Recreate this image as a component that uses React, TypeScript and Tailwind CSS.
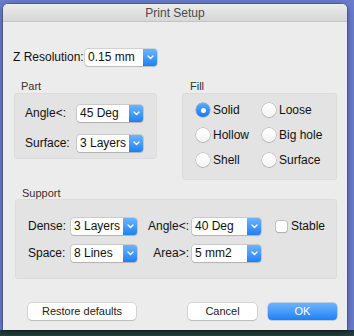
import React from "react";

const font = { fontFamily: '"Liberation Sans", Arial, sans-serif' };

function Chevron() {
  return (
    <svg width="7" height="5" viewBox="0 0 7 5" fill="none">
      <path d="M1 1 L3.5 3.5 L6 1" stroke="white" strokeWidth="1.3" strokeLinecap="round" strokeLinejoin="round" />
    </svg>
  );
}

function Select({ value, w }: { value: string; w: string }) {
  return (
    <div className={`flex h-[17px] ${w} rounded-[3px] bg-white shadow-[0_0_0_0.5px_rgba(0,0,0,0.22),0_1px_1px_rgba(0,0,0,0.12)]`}>
      <span className="flex-1 pl-[3px] text-[12px] leading-[17px] text-[#111]">{value}</span>
      <span className="flex w-[14px] items-center justify-center rounded-r-[3px] bg-gradient-to-b from-[#6cb4fb] to-[#1a80f7]">
        <Chevron />
      </span>
    </div>
  );
}

function Radio({ label, checked }: { label: string; checked?: boolean }) {
  return (
    <div className="flex h-[14px] items-center gap-[3px]">
      {checked ? (
        <span className="flex h-[14px] w-[14px] items-center justify-center rounded-full bg-gradient-to-b from-[#5aa9fa] to-[#1577f2] shadow-[0_0_0_0.5px_rgba(0,60,160,0.5)]">
          <span className="h-[5px] w-[5px] rounded-full bg-white" />
        </span>
      ) : (
        <span className="h-[14px] w-[14px] rounded-full bg-gradient-to-b from-white to-[#f4f4f4] shadow-[0_0_0_0.5px_rgba(0,0,0,0.3),0_1px_1px_rgba(0,0,0,0.1)]" />
      )}
      <span className="text-[12px] text-[#111]">{label}</span>
    </div>
  );
}

function Button({ label, w, primary }: { label: string; w: string; primary?: boolean }) {
  return (
    <div
      className={`flex h-[17px] ${w} items-center justify-center rounded-[4px] text-[11px] ${
        primary
          ? "bg-gradient-to-b from-[#6cb4fb] to-[#1a80f7] text-white shadow-[0_0_0_0.5px_rgba(0,70,170,0.4)]"
          : "bg-white text-[#222] shadow-[0_0_0_0.5px_rgba(0,0,0,0.2),0_1px_1px_rgba(0,0,0,0.12)]"
      }`}
    >
      {label}
    </div>
  );
}

export default function App() {
  return (
    <div
      className="h-[336px] w-[354px] overflow-hidden bg-[linear-gradient(to_bottom,#6a7cce_0,#6a7cce_330px,#1d2f3a_330px,#23463a_336px)] pl-[3px] pt-[4px]"
      style={font}
    >
      <div className="flex h-[326px] w-[344px] flex-col rounded-t-[5px] bg-[#ececec] shadow-[0_0_0_0.5px_rgba(0,0,0,0.35),0_2px_8px_rgba(0,0,0,0.35)]">
        {/* Title bar */}
        <div className="flex h-[18px] items-center justify-center rounded-t-[5px] border-b border-[#c4c4c4] bg-gradient-to-b from-[#ececec] to-[#d6d6d6] text-[12px] text-[#4a4a4a]">
          Print Setup
        </div>

        {/* Z resolution */}
        <div className="ml-[10px] mt-[26px] flex items-center">
          <span className="w-[72px] text-[12px] text-[#111]">Z Resolution:</span>
          <Select value="0.15 mm" w="w-[72px]" />
        </div>

        {/* Part + Fill */}
        <div className="mt-[14px] flex items-start">
          <div className="ml-[11px] w-[143px]">
            <div className="h-[13px] pl-[7px] text-[11px] leading-[13px] text-[#333]">Part</div>
            <div className="flex h-[66px] flex-col gap-[12px] rounded-[4px] bg-[#e3e3e3] pl-[11px] pt-[11px] shadow-[inset_0_0_0_0.5px_rgba(0,0,0,0.06)]">
              <div className="flex items-center">
                <span className="w-[52px] text-[12px] text-[#111]">Angle&lt;:</span>
                <Select value="45 Deg" w="w-[66px]" />
              </div>
              <div className="flex items-center">
                <span className="w-[52px] text-[12px] text-[#111]">Surface:</span>
                <Select value="3 Layers" w="w-[66px]" />
              </div>
            </div>
          </div>

          <div className="ml-[25px] w-[155px]">
            <div className="h-[13px] pl-[8px] text-[11px] leading-[13px] text-[#333]">Fill</div>
            <div className="grid h-[87px] grid-cols-[66px_1fr] content-start gap-y-[11px] rounded-[4px] bg-[#e3e3e3] pl-[14px] pt-[10px] shadow-[inset_0_0_0_0.5px_rgba(0,0,0,0.06)]">
              <Radio label="Solid" checked />
              <Radio label="Loose" />
              <Radio label="Hollow" />
              <Radio label="Big hole" />
              <Radio label="Shell" />
              <Radio label="Surface" />
            </div>
          </div>
        </div>

        {/* Support */}
        <div className="ml-[12px] mt-[7px] w-[322px]">
          <div className="h-[12px] pl-[7px] text-[11px] leading-[12px] text-[#333]">Support</div>
          <div className="flex h-[80px] flex-col gap-[9px] rounded-[4px] bg-[#e3e3e3] pl-[13px] pt-[18px] shadow-[inset_0_0_0_0.5px_rgba(0,0,0,0.06)]">
            <div className="flex items-center">
              <span className="w-[43px] text-[12px] text-[#111]">Dense:</span>
              <Select value="3 Layers" w="w-[66px]" />
              <span className="w-[55px] pr-[3px] text-right text-[12px] text-[#111]">Angle&lt;:</span>
              <Select value="40 Deg" w="w-[69px]" />
              <span className="ml-[15px] h-[11px] w-[11px] rounded-[2px] bg-white shadow-[0_0_0_0.5px_rgba(0,0,0,0.3),0_1px_1px_rgba(0,0,0,0.1)]" />
              <span className="ml-[4px] text-[12px] text-[#111]">Stable</span>
            </div>
            <div className="flex items-center">
              <span className="w-[43px] text-[12px] text-[#111]">Space:</span>
              <Select value="8 Lines" w="w-[66px]" />
              <span className="w-[55px] pr-[3px] text-right text-[12px] text-[#111]">Area&gt;:</span>
              <Select value="5 mm2" w="w-[69px]" />
            </div>
          </div>
        </div>

        {/* Buttons */}
        <div className="ml-[25px] mt-[24px] flex items-center">
          <Button label="Restore defaults" w="w-[108px]" />
          <div className="ml-[52px]">
            <Button label="Cancel" w="w-[69px]" />
          </div>
          <div className="ml-[11px]">
            <Button label="OK" w="w-[69px]" primary />
          </div>
        </div>
      </div>
    </div>
  );
}
